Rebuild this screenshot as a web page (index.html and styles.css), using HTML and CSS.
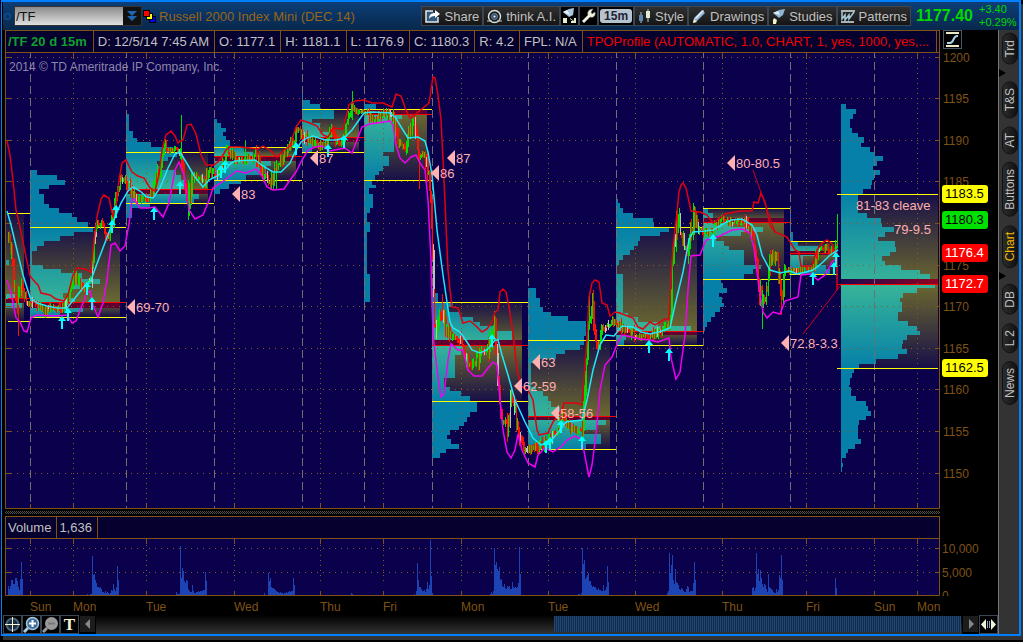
FILE: index.html
```html
<!DOCTYPE html>
<html lang="en">
<head>
    <meta charset="UTF-8">
    <meta name="viewport" content="width=device-width, initial-scale=1.0">
    <title>/TF - Charts</title>
    <link rel="stylesheet" href="styles.css">
</head>
<body>
    <div class="window">
        <header class="header">
            <span class="link-dot"></span>
            <div class="symbol-box">
                <input type="text" class="symbol" value="/TF" aria-label="Symbol">
                <button class="symbol-drop" aria-label="Symbol list">
                    <svg width="10" height="12" viewBox="0 0 10 12"><path d="M0 1h10L5 6zM0 6h10L5 11z" fill="#1c66b0"/></svg>
                </button>
            </div>
            <svg class="squares" width="13" height="13" viewBox="0 0 13 13">
                <rect x="6.5" y="6.5" width="6" height="6" fill="#0000ff" stroke="#000"/>
                <rect x="3.5" y="3.5" width="6" height="6" fill="#ffff00" stroke="#000"/>
                <rect x="0.5" y="0.5" width="6" height="6" fill="#ff0000" stroke="#000"/>
            </svg>
            <h1>Russell 2000 Index Mini (DEC 14)</h1>
            <nav class="toolbar">
                <button>
                    <svg width="16" height="14" viewBox="0 0 16 14"><path d="M8 2H1v11h12V8" fill="#31577a" stroke="#dde8ee" stroke-width="1.5"/><path d="M4 10c0-4 2-6 6-6V1l5 4-5 4V7C7 7 5 8 4 10z" fill="#fff"/></svg>
                    Share
                </button>
                <button>
                    <svg width="15" height="15" viewBox="0 0 15 15"><circle cx="7.5" cy="7.5" r="6" fill="#172028" stroke="#d8dfd5" stroke-width="1.5"/><circle cx="7.5" cy="7.5" r="3" fill="#35506c" stroke="#6f8596"/><circle cx="7.5" cy="7.5" r="1" fill="#fff"/><path d="M0 12h5M10 12h5" stroke="#c7cfb8"/></svg>
                    think A.I.
                </button>
                <button class="square" aria-label="Study filter">
                    <svg width="16" height="16" viewBox="0 0 16 16"><path d="M1 4l6-3 5-1-1 7-4 2z" fill="#a8c8e0"/><path d="M1 4l4-2 3 5z" fill="#e8f4fa"/><path d="M1 10h4v5H1zM8 10l4 3v-3h2v5H9v-2h2L8 11z" fill="#e4eecb"/></svg>
                </button>
                <button class="square" aria-label="Settings">
                    <svg width="16" height="16" viewBox="0 0 16 16"><path d="M1 13l6-6c-1-3 1-6 5-6l-2 3 1 2 3-2c1 4-2 6-5 5l-6 6z" fill="#f1f3dc" stroke="#7891a0" stroke-width="0.5"/></svg>
                </button>
                <button class="interval"><span>15m</span></button>
                <button>
                    <svg width="13" height="14" viewBox="0 0 13 14"><path d="M3 3v11M10 0v13" stroke="#b7cbd0"/><path d="M1 6h4v6H1z" fill="#5c87b0"/><path d="M8 2h4v7H8z" fill="#dfeccf"/></svg>
                    Style
                </button>
                <button>
                    <svg width="14" height="15" viewBox="0 0 14 15"><path d="M1 14l1-5 8-8 3 3-8 8z" fill="#8db1d3"/><path d="M3 9l8-8 1 1-8 8z" fill="#e8f2f8"/><path d="M1 14l1-4 3 3z" fill="#f5f5c8"/></svg>
                    Drawings
                </button>
                <button>
                    <svg width="13" height="15" viewBox="0 0 13 15"><path d="M1 4l6-3 6-1-2 6-4 3z" fill="#8cb4d4"/><path d="M1 4l5-2 2 4z" fill="#e4f0f7"/><path d="M2 9l3 2-1 4H1v-4z" fill="#f0f4c8"/></svg>
                    Studies
                </button>
                <button>
                    <svg width="14" height="13" viewBox="0 0 14 13"><path d="M0 1h14M0 12h13" stroke="#d5e6ea" stroke-width="1.5"/><path d="M1 2v7l3-4v5l4-5v4l5-7" fill="none" stroke="#a8cad8" stroke-width="1.5"/></svg>
                    Patterns
                </button>
            </nav>
            <div class="quote">
                <strong>1177.40</strong>
                <div class="change"><span>+3.40</span><span>+0.29%</span></div>
            </div>
        </header>

        <div class="body">
            <main class="chart">
                <div class="info-row">
                    <div class="info">
                        <span class="ticker">/TF 20 d 15m</span>
                        <span>D: 12/5/14 7:45 AM</span>
                        <span>O: 1177.1</span>
                        <span>H: 1181.1</span>
                        <span>L: 1176.9</span>
                        <span>C: 1180.3</span>
                        <span>R: 4.2</span>
                        <span>FPL: N/A</span>
                        <span class="study">TPOProfile (AUTOMATIC, 1.0, CHART, 1, yes, 1000, yes,...</span>
                    </div>
                    <button class="scale" aria-label="Scale">
                        <svg width="15" height="15" viewBox="0 0 15 15"><path d="M1 1h13M1 14h13" stroke="#ece9c9" stroke-width="2"/><path d="M2 11h3c4 0 3-7 7-7h1" fill="none" stroke="#a5d2e5" stroke-width="2"/></svg>
                    </button>
                </div>
                <svg class="plot" id="price-plot" viewBox="5 53 993 456" role="img" aria-label="Price chart"></svg>
                <div class="divider"></div>
                <div class="info volume-info">
                    <span>Volume</span>
                    <span>1,636</span>
                </div>
                <svg class="plot" id="volume-plot" viewBox="5 539 993 76" role="img" aria-label="Volume chart"></svg>
                <div class="scroll-row">
                    <button aria-label="Crosshair">
                        <svg width="17" height="17" viewBox="0 0 17 17"><circle cx="8.5" cy="8.5" r="6" fill="#1c2c3c" stroke="#4a657e" stroke-width="2"/><path d="M8.5 1v15M1 8.5h15" stroke="#f3f5d6"/></svg>
                    </button>
                    <button aria-label="Zoom in">
                        <svg width="17" height="17" viewBox="0 0 17 17"><path d="M1 16l4-4" stroke="#a8c8df" stroke-width="3"/><circle cx="9.5" cy="7.5" r="6" fill="#3d6d9c" stroke="#a8c8df" stroke-width="1.5"/><path d="M9.5 4v7M6 7.5h7" stroke="#fff" stroke-width="2"/></svg>
                    </button>
                    <button aria-label="Zoom out">
                        <svg width="17" height="17" viewBox="0 0 17 17"><path d="M1 16l4-4" stroke="#999" stroke-width="3"/><circle cx="9.5" cy="7.5" r="6.5" fill="#999"/><path d="M6 7.5h7" stroke="#777" stroke-width="2"/></svg>
                    </button>
                    <button class="text-tool" aria-label="Text">T</button>
                    <button class="arrow" aria-label="Scroll left">
                        <svg width="6" height="10" viewBox="0 0 6 10"><path d="M5 0v10L0 5z" fill="#888"/></svg>
                    </button>
                    <div class="track"><div class="thumb"></div></div>
                    <button class="arrow" aria-label="Scroll right">
                        <svg width="6" height="10" viewBox="0 0 6 10"><path d="M1 0v10l5-5z" fill="#888"/></svg>
                    </button>
                    <button aria-label="Expand">
                        <svg width="15" height="11" viewBox="0 0 15 11"><path d="M5 0v11L0 5.5zM10 0v11l5-5.5z" fill="#eef2d8"/><path d="M6.5 2v7M8.5 2v7" stroke="#88a0c0"/></svg>
                    </button>
                </div>
            </main>
            <aside class="sidebar">
                <button>Trd</button>
                <i class="notch"></i>
                <button>T&amp;S</button>
                <button>AT</button>
                <button>Buttons</button>
                <button class="active">Chart</button>
                <i class="notch"></i>
                <button>DB</button>
                <button>L 2</button>
                <button>News</button>
            </aside>
        </div>
    </div>
    <script src="chart.js"></script>
</body>
</html>
```
FILE: styles.css
```css
* {
    box-sizing: border-box;
}
body {
    margin: 0;
    padding: 0 2px 2px 1px;
    background-color: #000;
    font-family: "Liberation Sans", Arial, sans-serif;
    font-size: 13px;
    color: #c0c0c0;
}
button, input {
    font: inherit;
    color: inherit;
    margin: 0;
    padding: 0;
}
.window {
    border: 2px solid #0080ff;
    border-left-width: 1px;
    padding-left: 1px;
    background-color: #000;
    box-shadow: 2px 4px 0 #333;
    margin-bottom: 4px;
}

/* header */
.header {
    display: flex;
    align-items: center;
    height: 28px;
    background: linear-gradient(#0c3e78, #08284c);
}
.link-dot {
    width: 7px;
    height: 7px;
    border: 1px solid #1060b0;
    border-radius: 50%;
    margin: 0 3px 0 1px;
}
.symbol-box {
    display: flex;
    height: 20px;
    width: 128px;
    border: 1px solid #333;
}
.symbol {
    flex: 1;
    min-width: 0;
    border: none;
    padding-left: 1px;
    color: #111;
    background: linear-gradient(#8c8c8c, #e0e0e0);
}
.symbol-drop {
    width: 18px;
    border: none;
    background-color: #111;
    display: flex;
    align-items: center;
    justify-content: center;
}
.squares {
    margin: 0 3px 0 1px;
}
.header h1 {
    margin: 0;
    font-size: 13px;
    font-weight: normal;
    color: #98651a;
    white-space: nowrap;
}
.toolbar {
    display: flex;
    margin-left: auto;
}
.toolbar button {
    display: flex;
    align-items: center;
    gap: 4px;
    height: 20px;
    padding: 0 3px;
    border: 1px solid #3b4654;
    background: linear-gradient(#303030, #151515);
    white-space: nowrap;
}
.toolbar .square {
    width: 19px;
    padding: 0;
    justify-content: center;
    background: #000;
}
.toolbar .interval {
    padding: 0 1px;
    background: #000;
}
.interval span {
    padding: 0 4px;
    border-radius: 3px;
    background-color: #b5c3cf;
    color: #223;
    font-size: 12px;
    line-height: 14px;
    font-weight: bold;
}
.quote {
    display: flex;
    align-items: center;
    gap: 6px;
    padding: 0 2px 0 5px;
    width: 108px;
    color: #00d800;
}
.quote strong {
    font-size: 16px;
}
.change {
    display: flex;
    flex-direction: column;
    font-size: 11px;
    line-height: 13px;
}

/* chart */
.body {
    display: flex;
}
.chart {
    flex: 1;
    min-width: 0;
    padding-left: 2px;
}
.info-row {
    display: flex;
    gap: 3px;
}
.info {
    display: flex;
    flex: 1;
    min-width: 0;
    height: 23px;
    border: 1px solid #7f5217;
    background-color: #05002e;
}
.info span {
    padding: 0 5px 0 4px;
    line-height: 21px;
    border-right: 1px solid #7f5217;
    white-space: nowrap;
}
.info .ticker {
    color: #10a030;
    font-weight: bold;
    padding: 0 6px 0 2px;
}
.info .study {
    flex: 1;
    min-width: 0;
    overflow: hidden;
    margin-right: 2px;
    padding-right: 0;
    color: #f00000;
}
.volume-info {
    margin-right: 58px;
}
.volume-info span {
    padding: 0 5px 0 2px;
}
.scale {
    width: 19px;
    height: 19px;
    margin-right: 36px;
    display: flex;
    align-items: center;
    justify-content: center;
    border: 1px solid #4a5866;
    background-color: #000;
}
.plot {
    display: block;
    width: 100%;
    height: auto;
    overflow: visible;
}
.divider {
    height: 7px;
    margin-right: 58px;
    border: solid #000;
    border-width: 2px 0;
    background: repeating-conic-gradient(#505050 0 25%, #000 0 50%) 0 0 / 2px 2px;
}
.scroll-row {
    display: flex;
    height: 19px;
    margin-left: -2px;
}
.scroll-row button {
    width: 19px;
    display: flex;
    align-items: center;
    justify-content: center;
    border: 1px solid #3b4654;
    background-color: #000;
}
.scroll-row .text-tool {
    font: bold 17px "Liberation Serif", "Times New Roman", serif;
    color: #f3f5d6;
}
.scroll-row .arrow {
    width: 15px;
    margin: 1px 1px 2px;
    border: none;
    background-color: #1c1c1c;
}
.track {
    flex: 1;
    display: flex;
    justify-content: flex-end;
    background: linear-gradient(#000, #333);
}
.thumb {
    width: 47%;
    margin: 1px 1px 2px 0;
    background: repeating-linear-gradient(90deg, #1f4674 0 1px, #142c48 1px 2px);
}

/* right tabs */
.sidebar {
    width: 21px;
    display: flex;
    flex-direction: column;
    align-items: flex-end;
    gap: 8px;
    padding: 3px 1px 0 0;
    border-left: 1px solid #777;
    background-color: #333;
}
.sidebar button {
    writing-mode: vertical-rl;
    transform: rotate(180deg);
    width: 16px;
    padding: 6px 0;
    font-size: 12px;
    line-height: 14px;
    border: 1px solid #111;
    border-radius: 8px;
    background: linear-gradient(90deg, #111, #2c2c2c);
}
.sidebar .active {
    color: #f0b800;
}
.notch {
    align-self: flex-start;
    height: 0;
    border: solid transparent;
    border-width: 4px 0 4px 7px;
    border-left-color: #000;
    margin: -4px 0;
}

/* drawing */
.plot text {
    font-size: 13px;
}
.plot .axis {
    font-size: 12px;
    fill: #7f5217;
}
.plot .copyright {
    font-size: 12px;
    fill: #8d87a8;
}
.note {
    fill: #ffb0b0;
}
.frame, .tick {
    stroke: #7f5217;
    fill: none;
}
.dots-h {
    stroke: #8a5c1c;
    stroke-dasharray: 1 5;
}
.dots-v {
    stroke: #8a5c1c;
    stroke-dasharray: 1 4;
}
.day-line {
    stroke: #707070;
    stroke-dasharray: 8 4;
    stroke-dashoffset: 3;
}
.band {
    fill: none;
    stroke-width: 1.5;
}
```
FILE: chart.js
```js
const NS = 'http://www.w3.org/2000/svg';
const price = document.getElementById('price-plot');
const volume = document.getElementById('volume-plot');

function add(parent, tag, attrs, text) {
    const el = document.createElementNS(NS, tag);
    for (const key in attrs) el.setAttribute(key, attrs[key]);
    if (text) el.textContent = text;
    parent.appendChild(el);
    return el;
}
function line(parent, x1, y1, x2, y2, attrs) {
    return add(parent, 'line', Object.assign({ x1, y1, x2, y2 }, attrs));
}
function rect(parent, x, y, width, height, fill) {
    return add(parent, 'rect', { x, y, width, height, fill });
}
function gradient(id, y1, y2, poc, edge, mid) {
    const g = add(price, 'linearGradient', { id, gradientUnits: 'userSpaceOnUse', x1: 0, x2: 0, y1, y2 });
    add(g, 'stop', { offset: 0, 'stop-color': edge });
    add(g, 'stop', { offset: (poc - y1) / (y2 - y1), 'stop-color': mid });
    add(g, 'stop', { offset: 1, 'stop-color': edge });
}

const sessions = [30, 126, 214, 302, 364, 432, 528, 616, 703, 790, 874];
const days = [[30, 'Sun'], [73, 'Mon'], [146, 'Tue'], [234, 'Wed'], [320, 'Thu'], [383, 'Fri'], [461, 'Mon'],
    [548, 'Tue'], [635, 'Wed'], [722, 'Thu'], [806, 'Fri'], [874, 'Sun'], [917, 'Mon']];
const levels = [57, 98, 140, 181, 223, 265, 306, 348, 389, 431, 473];

// x: left, box: right edge of value area, end: right edge of lines, rows: [y, width]
const profiles = [
    { x: 5, box: 24, end: 30, vah: 213, val: 321, poc: 298, b1: 299, b2: 303, rows: [[260, 4], [265, 0], [294, 12], [303, 17], [308, 0]], stop: 308 },
    { x: 30, box: 120, end: 126, vah: 227, val: 317, poc: 302, b1: 303, b2: 308, stop: 317,
      rows: [[170, 7], [175, 27], [180, 35], [185, 19], [189, 9], [194, 14], [204, 19], [208, 29], [213, 42], [217, 47], [222, 58], [227, 63], [232, 44], [236, 30], [241, 14], [246, 7], [251, 2], [265, 13], [269, 31], [273, 52], [279, 70], [284, 52], [289, 40], [293, 33], [298, 45], [308, 53], [312, 30]] },
    { x: 126, box: 208, end: 214, vah: 152, val: 203, poc: 189, b1: 190, b2: 194, stop: 218,
      rows: [[114, 3], [131, 7], [138, 11], [142, 25], [147, 47], [152, 51], [157, 42], [161, 31], [166, 34], [170, 50], [175, 55], [180, 58], [194, 73], [199, 68], [203, 24], [208, 6]] },
    { x: 214, box: 296, end: 302, vah: 147, val: 180, poc: 156, b1: 157, b2: 161, stop: 194,
      rows: [[119, 3], [123, 7], [128, 12], [132, 9], [136, 12], [140, 16], [147, 30], [152, 39], [161, 57], [166, 52], [175, 32], [180, 27], [184, 15], [189, 6]] },
    { x: 302, box: 359, end: 364, vah: 109, val: 152, poc: 137, b1: 138, b2: 142, stop: 152,
      rows: [[90, 1], [100, 8], [104, 18], [109, 32], [119, 10], [123, 18], [132, 30], [142, 27], [147, 10]] },
    { x: 364, box: 427, end: 432, vah: 109, val: 180, poc: 114, b1: 110, b2: 114, stop: 302,
      rows: [[104, 12], [114, 38], [119, 31], [128, 34], [132, 30], [152, 19], [156, 25], [166, 19], [171, 15], [175, 11], [180, 8], [185, 12], [188, 5], [194, 9], [208, 6], [213, 3], [222, 6], [232, 3], [274, 6]] },
    { x: 432, box: 522, end: 528, vah: 302, val: 401, poc: 345, b1: 340, b2: 345, stop: 458,
      rows: [[288, 3], [293, 6], [302, 21], [307, 16], [312, 28], [317, 41], [322, 48], [326, 64], [331, 80], [345, 33], [350, 29], [355, 23], [378, 12], [387, 18], [391, 29], [396, 38], [401, 45], [412, 38], [417, 35], [422, 32], [426, 27], [430, 18], [435, 15], [439, 19], [444, 27], [449, 14], [453, 8]] },
    { x: 528, box: 610, end: 616, vah: 340, val: 449, poc: 416, b1: 417, b2: 420, stop: 449,
      rows: [[288, 8], [298, 12], [307, 15], [312, 23], [316, 40], [321, 58], [336, 56], [345, 52], [350, 37], [354, 28], [359, 7], [363, 3], [387, 8], [391, 15], [396, 20], [401, 23], [407, 32], [420, 78], [425, 68], [430, 55], [434, 73], [444, 58]] },
    { x: 616, box: 697, end: 703, vah: 227, val: 345, poc: 331, b1: 332, b2: 335, stop: 345,
      rows: [[199, 2], [203, 4], [208, 7], [213, 17], [218, 37], [222, 38], [227, 53], [232, 44], [236, 24], [241, 22], [246, 18], [250, 14], [255, 7], [260, 3], [265, 1], [274, 7], [313, 12], [317, 22], [322, 42], [326, 75], [335, 10], [340, 8]] },
    { x: 703, box: 784, end: 790, vah: 208, val: 279, poc: 222, b1: 218, b2: 222, stop: 331,
      rows: [[208, 5], [213, 10], [222, 30], [227, 60], [232, 38], [236, 13], [241, 21], [246, 26], [250, 41], [265, 58], [269, 50], [274, 41], [279, 18], [283, 20], [288, 24], [293, 16], [297, 19], [303, 21], [307, 17], [312, 12], [317, 8], [322, 4], [327, 2]] },
    { x: 790, box: 838, end: 838, vah: 241, val: 274, poc: 253, b1: 251, b2: 255, stop: 293,
      rows: [[213, 1], [232, 3], [241, 8], [246, 28], [256, 13], [265, 36], [269, 40], [274, 1]] },
    { x: 841, box: 938, end: 938, vah: 194, val: 368, poc: 284, b1: 279, b2: 284, stop: 472,
      rows: [[104, 5], [109, 15], [114, 12], [119, 9], [128, 11], [133, 17], [137, 23], [143, 20], [147, 29], [152, 34], [156, 42], [161, 36], [166, 32], [170, 39], [175, 33], [180, 31], [185, 30], [189, 22], [194, 17], [213, 26], [218, 40], [223, 41], [227, 53], [232, 44], [237, 37], [241, 54], [247, 55], [252, 49], [256, 41], [261, 44], [265, 60], [270, 79], [274, 89], [285, 94], [288, 76], [293, 62], [298, 59], [302, 61], [312, 57], [321, 67], [326, 76], [331, 79], [335, 66], [340, 62], [344, 61], [349, 66], [354, 57], [359, 35], [364, 18], [368, 13], [373, 11], [378, 9], [385, 8], [387, 10], [396, 15], [401, 25], [406, 27], [411, 30], [416, 25], [420, 18], [425, 17], [439, 20], [444, 14], [449, 7], [453, 5], [458, 1], [463, 2], [467, 1]] }
];

const upper = '7,141 10,155 13,180 16,210 20,227 25,252 30,276 35,282 38,285 41,293 50,295 56,299 64,301 68,295 73,275 77,268 85,269 91,272 94,240 97,217 101,199 104,195 109,198 113,217 117,200 119,180 122,163 126,160 132,172 138,176 144,178 150,188 155,191 159,175 162,150 166,135 171,131 175,136 178,143 183,140 187,125 191,124 196,134 201,155 206,165 214,165 220,160 226,150 230,147 240,147 250,148 258,149 263,146 270,150 277,157 284,150 290,146 296,127 301,120 310,123 317,126 323,135 328,137 333,128 343,129 346,117 349,105 355,101 364,100 372,103 383,103 392,107 396,94 401,96 406,110 410,118 416,114 423,108 429,103 431,90 433,77 435,78 438,95 441,120 444,180 448,270 450,290 452,307 458,308 463,323 470,321 475,325 482,332 487,329 492,322 495,312 498,310 500,292 503,289 506,292 509,307 513,333 517,370 521,386 528,390 533,400 537,430 539,435 548,433 553,422 562,410 564,403 577,403 582,405 584,380 587,340 589,297 592,283 595,280 599,282 602,303 607,305 610,316 615,312 620,313 633,318 638,327 643,329 650,322 655,325 665,319 669,319 671,277 673,247 677,213 679,192 681,185 683,183 686,188 688,197 691,211 700,212 707,215 713,223 720,218 725,214 740,211 752,211 754,202 758,203 761,193 765,202 770,225 775,232 787,237 795,250 799,252 801,266 812,266 817,250 822,243 827,240 832,244 837,257 837,290';
const middle = '7,211 11,225 17,250 23,275 30,297 37,303 47,306 57,308 67,308 75,298 83,288 91,280 98,261 106,240 113,222 121,203 128,191 133,187 140,191 147,197 153,198 160,188 168,168 175,154 180,152 186,162 195,177 203,187 209,180 217,176 225,170 230,164 235,161 255,160 263,166 273,172 281,172 290,163 295,152 301,142 307,138 313,136 325,140 337,140 345,137 352,130 359,120 364,113 373,112 390,113 395,117 403,130 408,138 418,137 425,141 428,152 432,175 437,230 443,275 450,322 453,328 460,332 467,342 472,350 480,353 487,350 495,340 498,340 502,355 508,375 515,400 525,422 533,438 541,445 550,442 560,430 566,422 582,420 587,400 593,370 600,345 606,335 614,336 622,326 633,327 641,332 650,334 662,331 670,328 675,305 683,272 689,240 693,232 705,231 713,230 723,224 731,220 742,219 752,225 757,235 762,255 770,270 780,273 790,271 797,274 806,272 813,270 822,263 830,255 838,250';
const lower = '7,280 11,293 16,318 20,322 24,331 27,332 31,318 37,315 55,316 67,315 72,323 76,321 81,308 87,293 90,291 93,305 98,317 103,303 107,280 111,245 115,243 120,251 125,246 129,224 132,200 134,199 140,208 148,208 155,207 163,217 169,203 175,170 179,162 184,175 189,210 195,219 203,215 208,203 213,188 222,182 230,176 237,171 246,173 256,169 262,176 267,187 273,190 284,189 290,180 296,172 302,160 308,150 315,147 322,146 330,151 340,149 345,148 352,153 357,140 362,127 370,124 390,121 393,125 396,145 400,158 405,163 411,157 416,155 420,163 425,170 428,200 431,260 432,302 433,335 437,370 441,397 444,394 448,360 451,344 458,350 463,350 468,370 474,376 482,376 488,368 493,362 497,365 500,400 503,430 507,452 511,458 515,450 518,434 522,450 528,463 535,467 538,455 545,448 553,452 562,446 567,440 575,436 582,440 586,462 589,477 592,465 596,435 600,390 605,365 612,357 618,342 622,335 632,337 640,339 650,340 658,342 669,338 671,358 676,379 680,372 685,335 688,290 691,256 700,255 706,240 720,236 732,230 742,229 750,233 754,248 758,280 763,312 767,318 773,312 780,314 785,301 798,297 801,275 810,274 818,280 825,275 832,262 837,258';
const closes = '8,240 11,255 14,290 17,312 19,290 22,283 26,300 30,302 40,305 43,312 50,307 60,309 66,300 71,285 75,275 80,286 84,290 88,278 91,275 94,240 97,222 101,225 106,235 109,230 113,215 117,190 120,178 125,180 131,190 138,198 145,200 153,192 159,170 163,145 168,150 175,150 180,152 184,175 188,205 192,175 198,178 204,180 210,170 216,174 222,165 227,150 236,160 246,160 255,155 264,175 270,182 276,165 284,155 290,145 297,130 302,135 312,142 325,147 330,130 335,142 343,140 347,120 353,108 358,112 366,112 373,118 385,112 393,118 397,140 405,148 410,130 414,120 419,155 425,155 429,185 432,250 434,330 442,315 450,335 460,340 465,355 472,370 480,352 487,350 494,325 497,380 501,420 507,425 512,390 516,420 520,440 525,450 535,448 548,440 556,430 562,415 568,425 575,430 582,430 585,380 588,320 592,310 597,345 602,330 608,325 613,322 620,325 628,330 637,335 650,336 660,330 670,320 673,250 678,215 684,245 688,250 694,215 698,230 705,232 713,230 722,220 735,222 745,220 753,235 758,280 762,310 767,280 771,250 776,260 781,295 785,270 795,270 805,268 813,268 818,250 827,248 833,250 837,245';

function points(text) {
    return text.split(' ').map(p => p.split(',').map(Number));
}

// background and value areas
rect(price, 5, 53, 934, 455, '#0a004c');
profiles.forEach((p, i) => {
    gradient('area' + i, p.vah, p.val, p.poc, '#181048', '#6b6830');
    gradient('rows' + i, p.vah, p.val, p.poc, '#0680a8', '#38b498');
    rect(price, p.x, p.vah, p.box - p.x, p.val - p.vah, `url(#area${i})`);
    p.rows.forEach((row, n) => {
        const bottom = n + 1 < p.rows.length ? p.rows[n + 1][0] : p.stop;
        rect(price, p.x, row[0], row[1], bottom - row[0], `url(#rows${i})`);
    });
    rect(price, p.x, p.b1, p.box - p.x, p.b2 - p.b1, p.x === 841 ? 'url(#poc-bar)' : '#600030');
});
const bar = add(price, 'linearGradient', { id: 'poc-bar' });
add(bar, 'stop', { offset: 0, 'stop-color': '#1c0850' });
add(bar, 'stop', { offset: 1, 'stop-color': '#900020' });

// grid
levels.forEach(y => {
    line(price, 11, y + 0.5, 935, y + 0.5, { class: 'dots-h' });
    line(price, 5, y + 0.5, 11, y + 0.5, { class: 'tick' });
    line(price, 935, y + 0.5, 939, y + 0.5, { class: 'tick' });
});
sessions.forEach(x => line(price, x + 0.5, 53, x + 0.5, 508, { class: 'day-line' }));
days.forEach(([x]) => {
    line(price, x + 0.5, 504, x + 0.5, 508, { class: 'tick' });
    if (sessions.includes(x)) return;
    line(price, x + 0.5, 58, x + 0.5, 504, { class: 'dots-v' });
    line(price, x + 0.5, 53, x + 0.5, 58, { class: 'tick' });
});
add(price, 'path', { class: 'frame', d: 'M5.5 53V508.5H939.5V53' });

profiles.forEach(p => {
    const left = p.x === 841 ? 837 : Math.max(p.x, 8);
    line(price, left, p.vah + 0.5, p.end, p.vah + 0.5, { stroke: '#ffff00' });
    line(price, left, p.val + 0.5, p.end, p.val + 0.5, { stroke: '#ffff00' });
    line(price, left, p.poc + 0.5, p.end, p.poc + 0.5, { stroke: '#ff0000' });
});

// candles
let seed = 11;
function rnd() {
    seed = (seed * 16807) % 2147483647;
    return seed / 2147483647;
}
const path = points(closes);
let last = path[0][1];
for (let n = 0; n < path.length - 1; n++) {
    const [xa, ya] = path[n];
    const [xb, yb] = path[n + 1];
    const size = Math.min(22, 5 + Math.abs(yb - ya) / 2);
    for (let x = xa; x < xb; x++) {
        const y = ya + (yb - ya) * (x - xa) / (xb - xa) + (rnd() - 0.5) * size;
        const color = rnd() < 0.06 ? '#c0c0c0' : y < last ? '#00e000' : '#ff1000';
        const top = Math.round(Math.min(y, last));
        const bottom = Math.round(Math.max(y, last));
        const wick = Math.round(rnd() * size / 2);
        rect(price, x, top - wick, 1, bottom - top + 2 * wick + 1, color);
        if (x % 2) rect(price, x, top, 2, Math.max(2, bottom - top), color);
        last = y;
    }
}
[[18, 305, 336, 0], [181, 115, 160, 1], [188, 180, 220, 1], [245, 141, 165, 1], [352, 91, 120, 1], [276, 160, 189, 1],
    [419, 150, 189, 0], [442, 294, 320, 0], [589, 292, 330, 1], [677, 202, 240, 0], [694, 206, 235, 1], [762, 290, 329, 1],
    [781, 280, 315, 0], [837, 214, 248, 1]].forEach(c => rect(price, c[0], c[1], 1, c[2] - c[1], c[3] ? '#00e000' : '#ff1000'));

add(price, 'polyline', { class: 'band', stroke: '#e00010', points: upper });
add(price, 'polyline', { class: 'band', stroke: '#f000f0', points: lower });
add(price, 'polyline', { class: 'band', stroke: '#20e8f8', points: middle });
line(price, 753, 170, 775, 232, { stroke: '#d00018' });
line(price, 803, 334, 841, 285, { stroke: '#d00018' });

// entry arrows
[[62, 316], [68, 308], [87, 282], [92, 297], [112, 220], [116, 205], [154, 207], [180, 181], [221, 165], [225, 160], [296, 142],
    [328, 144], [344, 135], [492, 334], [546, 440], [550, 437], [561, 420], [582, 436], [649, 340], [669, 348], [713, 234],
    [813, 272], [836, 252], [834, 262]].forEach(([x, y]) => {
    add(price, 'path', { fill: '#00ffff', d: `M${x} ${y}l4 5h-3v8h-2v-8h-3z` });
});

// notes
[[127, 307, '69-70'], [232, 194, '83'], [310, 158, '87'], [447, 158, '87'], [431, 173, '86'], [532, 362, '63'],
    [514, 386, '62-59'], [551, 413, '58-56'], [727, 163, '80-80.5'], [781, 343, '72.8-3.3']].forEach(([x, y, text]) => {
    add(price, 'path', { class: 'note', d: `M${x} ${y}l8-8v16z` });
    add(price, 'text', { class: 'note', x: x + 9, y: y + 5 }, text);
});
add(price, 'text', { class: 'note', x: 856, y: 210 }, '81-83 cleave');
add(price, 'text', { class: 'note', x: 894, y: 234 }, '79-9.5');
add(price, 'text', { class: 'copyright', x: 9, y: 71 }, '2014 © TD Ameritrade IP Company, Inc.');

// price axis
levels.forEach((y, i) => {
    if (i !== 4) add(price, 'text', { class: 'axis', x: 943, y: y + 5 }, String(1200 - i * 5));
});
[[185, '1183.5', '#ffff00', '#000'], [211, '1180.3', '#00e000', '#000'], [244, '1176.4', '#ff0000', '#fff'],
    [275, '1172.7', '#ff0000', '#fff'], [359, '1162.5', '#ffff00', '#000']].forEach(([y, text, fill, color]) => {
    rect(price, 942, y, 46, 18, fill).setAttribute('rx', 3);
    add(price, 'text', { x: 945, y: y + 13, fill: color }, text);
});

// volume
const bars = {
    8: [9, 6, 9, 15, 15, 11, 11, 17, 17, 14, 8, 5, 16, 33, 16],
    87: [1, 0, 0, 1, 1, 39, 20, 21, 15, 12, 8, 8, 7, 8, 6, 3, 3, 2, 4, 2, 3, 2, 1, 2, 5, 4, 11, 6, 4, 8, 29, 15],
    176: [3, 1, 1, 1, 49, 17, 27, 24, 14, 12, 15, 14, 6, 4, 3, 3, 10, 4, 2, 2, 3, 3, 4, 3, 4, 4, 4, 5, 5, 23, 14],
    264: [2, 0, 0, 0, 22, 14, 17, 8, 7, 7, 6, 5, 4, 3, 3, 2, 3, 2, 2, 1, 2, 2, 3, 2, 3, 4, 3, 4, 4, 17, 10],
    351: [2, 1],
    414: [1, 0, 4, 32, 15, 8, 8, 6, 4, 4, 5, 3, 6, 13, 6, 10, 55, 19, 2],
    490: [1, 3, 1, 4, 47, 30, 33, 26, 24, 28, 15, 16, 9, 8, 11, 7, 6, 9, 8, 9, 6, 6, 13, 8, 7, 8, 7, 8, 12, 48, 21],
    578: [1, 1, 0, 2, 47, 31, 35, 16, 18, 20, 22, 14, 14, 10, 8, 9, 8, 8, 6, 5, 7, 5, 5, 4, 4, 10, 4, 5, 8, 29, 13],
    667: [2, 4, 42, 22, 30, 40, 15, 11, 26, 13, 12, 10, 6, 5, 7, 6, 4, 3, 3, 6, 9, 8, 3, 4, 4, 4, 12, 33, 15],
    752: [7, 8, 4, 7, 42, 21, 26, 14, 25, 17, 11, 8, 11, 10, 6, 3, 21, 8, 7, 6, 5, 3, 2, 2, 6, 3, 5, 20, 17, 40, 15],
    835: [17, 7]
};
rect(volume, 5, 539, 934, 56, '#0a004c');
[548, 572].forEach(y => {
    line(volume, 11, y + 0.5, 935, y + 0.5, { class: 'dots-h' });
    line(volume, 5, y + 0.5, 11, y + 0.5, { class: 'tick' });
    line(volume, 935, y + 0.5, 939, y + 0.5, { class: 'tick' });
});
for (const start in bars) {
    bars[start].forEach((h, i) => rect(volume, Number(start) + i, 595 - h, 1, h, '#1c44b4'));
}
days.forEach(([x, name]) => {
    line(volume, x + 0.5, 545, x + 0.5, 581, { class: 'dots-v' });
    line(volume, x + 0.5, 539, x + 0.5, 544, { class: 'tick' });
    line(volume, x + 0.5, 591, x + 0.5, 595, { class: 'tick' });
    add(volume, 'text', { class: 'axis', x, y: 611 }, name);
});
add(volume, 'path', { class: 'frame', d: 'M5.5 539V595.5H939.5V539' });
add(volume, 'text', { class: 'axis', x: 942, y: 553 }, '10,000');
add(volume, 'text', { class: 'axis', x: 942, y: 577 }, '5,000');
const clip = add(volume, 'clipPath', { id: 'axis-clip' });
rect(clip, 940, 539, 58, 57, '#000');
add(volume, 'text', { class: 'axis', x: 942, y: 600, 'clip-path': 'url(#axis-clip)' }, '0');
```
